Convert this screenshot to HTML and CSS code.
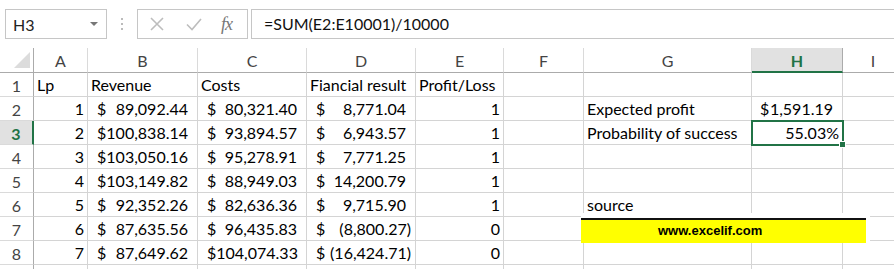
FILE: index.html
```html
<!DOCTYPE html>
<html>
<head>
<meta charset="utf-8">
<link rel="stylesheet" href="styles.css">
</head>
<body>
<div class="app">
  <div class="toolbar">
    <div class="namebox"><span class="nb-text">H3</span><span class="nb-arrow"></span></div>
    <div class="dots"><i></i><i></i><i></i></div>
    <div class="fxgroup">
      <svg class="ico" width="16" height="16" viewBox="0 0 16 16"><path d="M2 2 L14 14 M14 2 L2 14" stroke="#bdbdbd" stroke-width="1.6" fill="none"/></svg>
      <svg class="ico" width="18" height="16" viewBox="0 0 18 16"><path d="M2 8.5 L7 13.5 L16 3" stroke="#bdbdbd" stroke-width="1.6" fill="none"/></svg>
      <span class="fx">fx</span>
    </div>
    <div class="formula">=SUM(E2:E10001)/10000</div>
  </div>
  <div class="grid">
    <div class="ch corner"><span class="tri"></span></div>
    <div class="ch">A</div><div class="ch">B</div><div class="ch">C</div><div class="ch">D</div><div class="ch">E</div><div class="ch">F</div><div class="ch">G</div><div class="ch sel">H</div><div class="ch last">I</div>

    <div class="rh">1</div>
    <div class="c">Lp</div><div class="c">Revenue</div><div class="c">Costs</div><div class="c">Fiancial result</div><div class="c">Profit/Loss</div><div class="c"></div><div class="c"></div><div class="c"></div><div class="c"></div>

    <div class="rh">2</div>
    <div class="c r">1</div>
    <div class="c acc"><span>$</span><span class="p">89,092.44</span></div>
    <div class="c acc"><span>$</span><span class="p">80,321.40</span></div>
    <div class="c acc"><span>$</span><span class="p">8,771.04</span></div>
    <div class="c r">1</div><div class="c"></div>
    <div class="c">Expected profit</div>
    <div class="c acc h"><span>$</span><span class="p">1,591.19</span></div>
    <div class="c"></div>

    <div class="rh rsel">3</div>
    <div class="c r">2</div>
    <div class="c acc"><span>$</span><span class="p">100,838.14</span></div>
    <div class="c acc"><span>$</span><span class="p">93,894.57</span></div>
    <div class="c acc"><span>$</span><span class="p">6,943.57</span></div>
    <div class="c r">1</div><div class="c"></div>
    <div class="c">Probability of success</div>
    <div class="c r active">55.03%<span class="handle"></span></div>
    <div class="c"></div>

    <div class="rh">4</div>
    <div class="c r">3</div>
    <div class="c acc"><span>$</span><span class="p">103,050.16</span></div>
    <div class="c acc"><span>$</span><span class="p">95,278.91</span></div>
    <div class="c acc"><span>$</span><span class="p">7,771.25</span></div>
    <div class="c r">1</div><div class="c"></div><div class="c"></div><div class="c"></div><div class="c"></div>

    <div class="rh">5</div>
    <div class="c r">4</div>
    <div class="c acc"><span>$</span><span class="p">103,149.82</span></div>
    <div class="c acc"><span>$</span><span class="p">88,949.03</span></div>
    <div class="c acc"><span>$</span><span class="p">14,200.79</span></div>
    <div class="c r">1</div><div class="c"></div><div class="c"></div><div class="c"></div><div class="c"></div>

    <div class="rh">6</div>
    <div class="c r">5</div>
    <div class="c acc"><span>$</span><span class="p">92,352.26</span></div>
    <div class="c acc"><span>$</span><span class="p">82,636.36</span></div>
    <div class="c acc"><span>$</span><span class="p">9,715.90</span></div>
    <div class="c r">1</div><div class="c"></div>
    <div class="c">source</div><div class="c"></div><div class="c"></div>

    <div class="rh">7</div>
    <div class="c r">6</div>
    <div class="c acc"><span>$</span><span class="p">87,635.56</span></div>
    <div class="c acc"><span>$</span><span class="p">96,435.83</span></div>
    <div class="c acc"><span>$</span><span class="n">(8,800.27)</span></div>
    <div class="c r">0</div><div class="c"></div><div class="c"></div><div class="c"></div><div class="c"></div>

    <div class="rh">8</div>
    <div class="c r">7</div>
    <div class="c acc"><span>$</span><span class="p">87,649.62</span></div>
    <div class="c acc"><span>$</span><span class="p">104,074.33</span></div>
    <div class="c acc"><span>$</span><span class="n">(16,424.71)</span></div>
    <div class="c r">0</div><div class="c"></div><div class="c"></div><div class="c"></div><div class="c"></div>

    <div class="rh"></div>
    <div class="c"></div><div class="c"></div><div class="c"></div><div class="c"></div><div class="c"></div><div class="c"></div><div class="c"></div><div class="c"></div><div class="c"></div>
  </div>
  <div class="banner"><span>www.excelif.com</span></div>
</div>
</body>
</html>
```

FILE: styles.css
```css
* { box-sizing: border-box; }
html, body { margin: 0; padding: 0; background: #fff; }
body { font-family: Lato, "Open Sans", sans-serif; color: #000; }
.app { position: relative; width: 894px; height: 269px; overflow: hidden; }

.toolbar { height: 48px; display: flex; align-items: flex-start; padding-top: 9px; padding-left: 5px; }
.namebox { width: 102px; height: 30px; border: 1px solid #c6c6c6; display: flex; align-items: center; justify-content: space-between; padding: 0 8px 0 7px; font-size: 16px; color: #222; }
.nb-arrow { width: 0; height: 0; border-left: 4px solid transparent; border-right: 4px solid transparent; border-top: 4px solid #777; margin-top: -1px; }
.dots { width: 30px; height: 30px; display: flex; flex-direction: column; align-items: center; justify-content: center; gap: 3px; }
.dots i { display: block; width: 2px; height: 2px; background: #bbb; }
.fxgroup { width: 111px; height: 30px; border: 1px solid #c6c6c6; display: flex; align-items: center; padding-left: 11px; gap: 20px; }
.fx { font-family: "Liberation Serif", serif; font-style: italic; font-size: 18px; color: #777; margin-left: -2px; letter-spacing: -1px; }
.formula { flex: 1; margin-left: 3px; height: 30px; border: 1px solid #c6c6c6; border-right: none; font-size: 16px; padding-left: 12px; line-height: 28px; color: #111; }

.grid { display: grid; grid-template-columns: 34px 54px 110px 109px 109px 88px 80px 168px 91px 60px; grid-template-rows: 25px repeat(9, 24px); font-size: 16px; }
.ch { border-right: 1px solid #dadada; border-bottom: 1px solid #ababab; color: #444; display: flex; align-items: center; justify-content: center; font-size: 16px; padding-top: 1px; }
.ch.last { border-right: none; }
.ch.corner { border-right: 1px solid #ababab; justify-content: flex-end; align-items: flex-end; padding: 0 3px 4px 0; }
.tri { width: 0; height: 0; border-left: 16px solid transparent; border-bottom: 16px solid #dcdcdc; }
.ch.sel { background: #e1e1e1; color: #217346; font-weight: 700; border-bottom: 2px solid #217346; border-right-color: #ababab; }
.rh { border-right: 1px solid #ababab; border-bottom: 1px solid #dadada; color: #444; display: flex; justify-content: center; align-items: flex-end; font-size: 16px; padding-bottom: 1px; }
.rh.rsel { background: #e1e1e1; color: #217346; font-weight: 700; border-right: 2px solid #217346; }
.c { border-right: 1px solid #d4d4d4; border-bottom: 1px solid #d4d4d4; display: flex; align-items: flex-end; padding: 0 3px 2px 3px; white-space: nowrap; position: relative; }
.c.r { justify-content: flex-end; }
.acc { justify-content: space-between; padding-left: 9px; padding-right: 4px; }
.acc.h { padding-left: 8px; }
.acc .p { padding-right: 5px; }
.active { outline: 2px solid #217346; outline-offset: -1px; z-index: 2; }
.handle { position: absolute; right: -4px; bottom: -4px; width: 7px; height: 7px; background: #217346; border: 1px solid #fff; }

.banner { position: absolute; left: 581px; top: 213px; width: 289px; height: 30px; background: #fff; padding-top: 5px; }
.banner span { display: block; height: 25px; border-top: 2px solid #111; background: #ffff00; font-family: "Liberation Sans", Arial, sans-serif; font-weight: 700; font-size: 13px; line-height: 22px; padding-left: 77px; width: 285px; }
```
